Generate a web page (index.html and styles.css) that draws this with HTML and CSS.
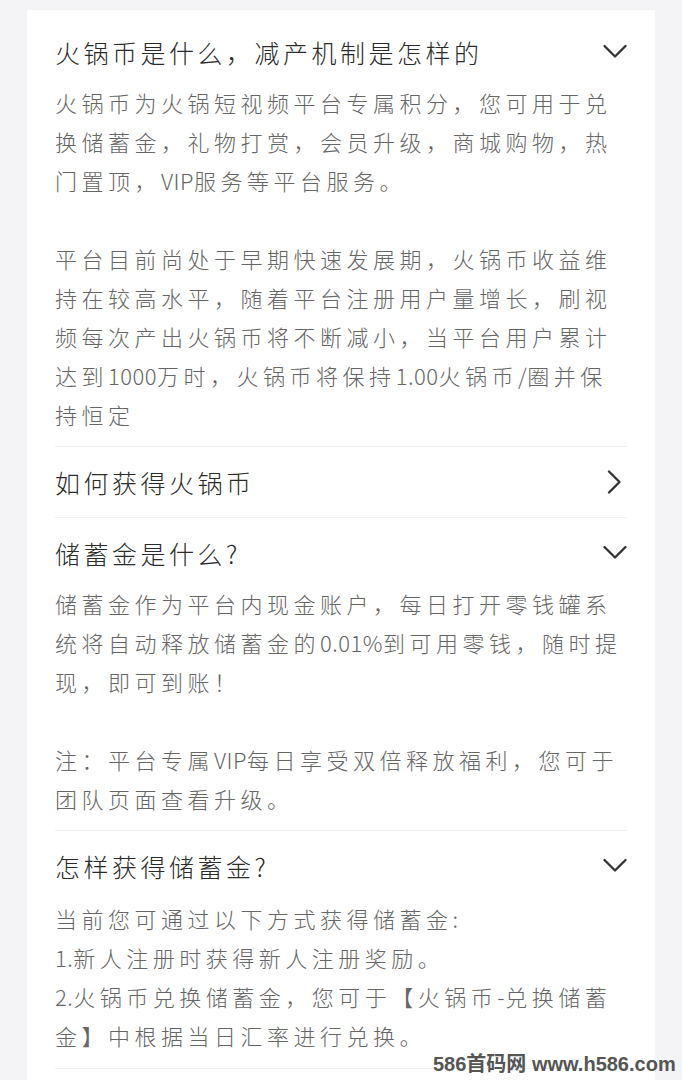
FILE: index.html
```html
<!DOCTYPE html>
<html lang="zh-CN">
<head>
    <meta charset="UTF-8">
    <meta name="viewport" content="width=device-width, initial-scale=1.0">
    <title>常见问题</title>
    <link rel="stylesheet" href="styles.css">
</head>
<body>
    <div class="faq-card">
        <div class="faq-item">
            <div class="faq-head">
                <span class="faq-title">火锅币是什么，减产机制是怎样的</span>
                <svg class="faq-arrow" viewBox="0 0 24 24"><polyline points="1.5,6 12,16.5 22.5,6"/></svg>
            </div>
            <div class="faq-body">
                <p>火锅币为火锅短视频平台专属积分，您可用于兑换储蓄金，礼物打赏，会员升级，商城购物，热门置顶，<span class="en">VIP</span>服务等平台服务。</p>
                <p>平台目前尚处于早期快速发展期，火锅币收益维持在较高水平，随着平台注册用户量增长，刷视频每次产出火锅币将不断减小，当平台用户累计达到<span class="en">1000</span>万时，火锅币将保持<span class="en">1.00</span>火锅币<span class="en">/</span>圈并保持恒定</p>
            </div>
        </div>
        <div class="faq-item">
            <div class="faq-head">
                <span class="faq-title">如何获得火锅币</span>
                <svg class="faq-arrow" viewBox="0 0 24 24"><polyline points="6,1.5 16.5,12 6,22.5"/></svg>
            </div>
        </div>
        <div class="faq-item">
            <div class="faq-head">
                <span class="faq-title">储蓄金是什么?</span>
                <svg class="faq-arrow" viewBox="0 0 24 24"><polyline points="1.5,6 12,16.5 22.5,6"/></svg>
            </div>
            <div class="faq-body">
                <p>储蓄金作为平台内现金账户，每日打开零钱罐系统将自动释放储蓄金的<span class="en">0.01%</span>到可用零钱，随时提现，即可到账！</p>
                <p>注：平台专属<span class="en">VIP</span>每日享受双倍释放福利，您可于团队页面查看升级。</p>
            </div>
        </div>
        <div class="faq-item">
            <div class="faq-head">
                <span class="faq-title">怎样获得储蓄金?</span>
                <svg class="faq-arrow" viewBox="0 0 24 24"><polyline points="1.5,6 12,16.5 22.5,6"/></svg>
            </div>
            <div class="faq-body last">
                <p class="tight">当前您可通过以下方式获得储蓄金<span class="en">:</span></p>
                <p class="tight"><span class="en">1.</span>新人注册时获得新人注册奖励。</p>
                <p class="tight"><span class="en">2.</span>火锅币兑换储蓄金，您可于【火锅币<span class="en">-</span>兑换储蓄金】中根据当日汇率进行兑换。</p>
            </div>
        </div>
    </div>
    <div class="watermark">586首码网 www.h586.com</div>
</body>
</html>
```

FILE: styles.css
```css
* { margin: 0; padding: 0; box-sizing: border-box; }
body { background: #f4f4f7; font-family: "Noto Sans CJK SC", "Noto Sans", sans-serif; color: #333; min-height: 1080px; position: relative; overflow: hidden; }

.faq-card { margin: 10px 27px 0; background: #fff; padding: 7px 28px 0; min-height: 1070px; }
.faq-item { border-bottom: 1px solid #f0f0f0; padding-bottom: 4px; }
.faq-head { height: 66px; padding-top: 4px; display: flex; align-items: center; justify-content: space-between; }
.faq-title { font-size: 25px; letter-spacing: 3.5px; color: #2b2b2b; font-weight: 300; white-space: nowrap; }
.faq-arrow { width: 24px; height: 24px; fill: none; stroke: #333; stroke-width: 2.3; stroke-linecap: round; stroke-linejoin: round; flex-shrink: 0; }

.faq-body { padding-bottom: 8px; font-size: 22px; line-height: 39px; letter-spacing: 4.5px; color: #666; font-weight: 300; }
.faq-body.last { padding-top: 2px; padding-bottom: 9px; }
.faq-body p + p { margin-top: 39px; }
.faq-body p.tight + p.tight { margin-top: 0; }
.en { letter-spacing: 0.5px; }

.watermark { position: absolute; left: 433px; top: 1048px; font-family: "Liberation Sans", "Noto Sans CJK SC", sans-serif; font-weight: bold; font-size: 20px; color: #555; white-space: nowrap; }
```
